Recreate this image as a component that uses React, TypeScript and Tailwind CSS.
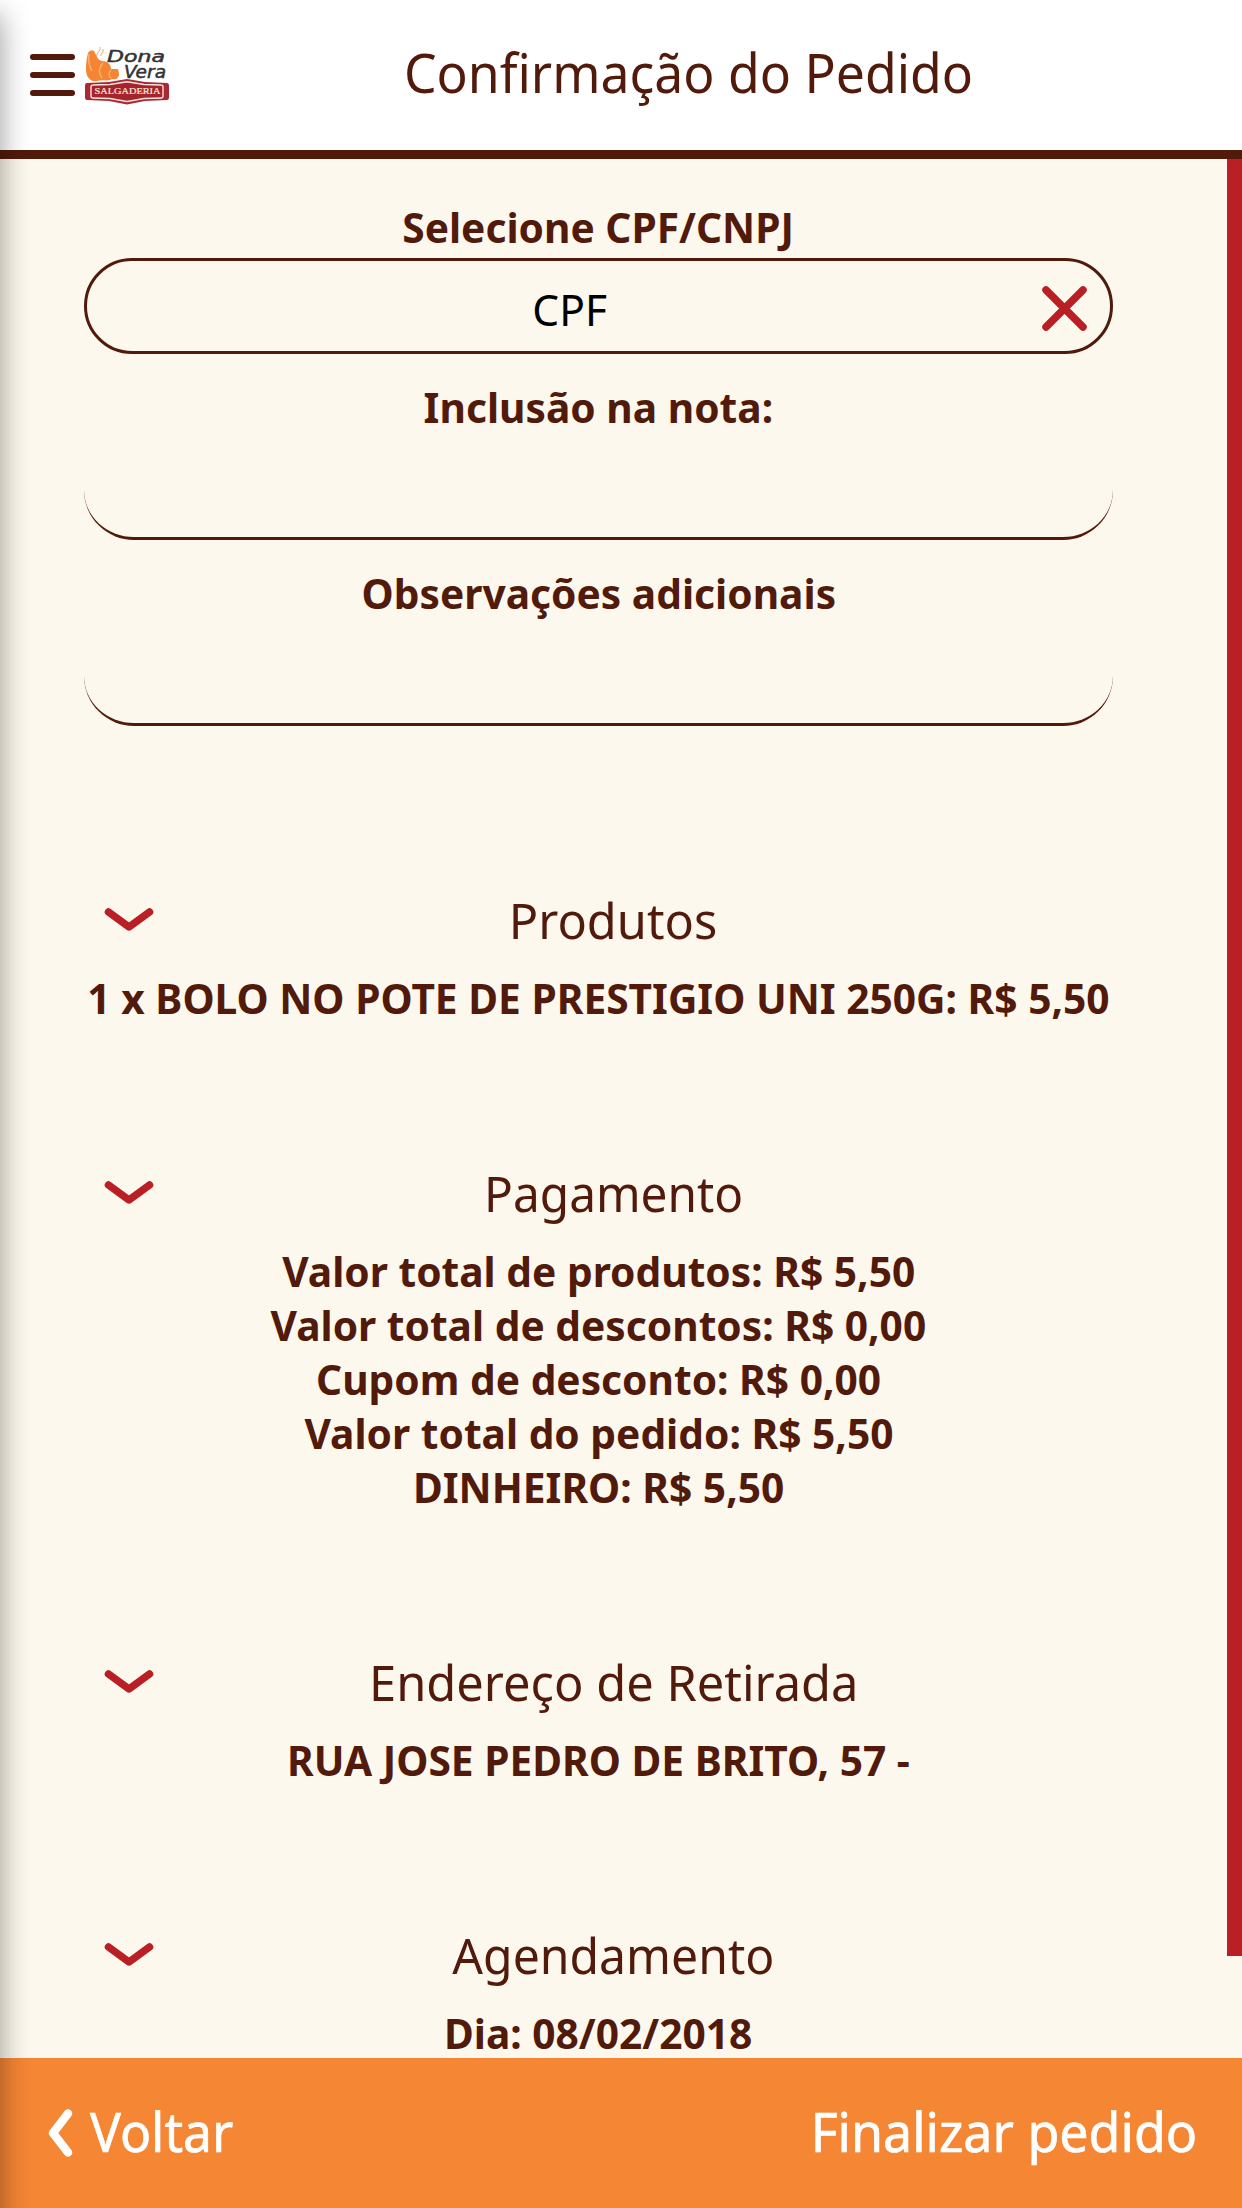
import * as React from "react";
import clsx from "clsx";

type Section = {
  title: string;
  lines: string[];
  titleClass: string;
};

const sections: Section[] = [
  {
    title: "Produtos",
    lines: ["1 x BOLO NO POTE DE PRESTIGIO UNI 250G: R$ 5,50"],
    titleClass: "scale-x-[0.974]",
  },
  {
    title: "Pagamento",
    lines: [
      "Valor total de produtos: R$ 5,50",
      "Valor total de descontos: R$ 0,00",
      "Cupom de desconto: R$ 0,00",
      "Valor total do pedido: R$ 5,50",
      "DINHEIRO: R$ 5,50",
    ],
    titleClass: "scale-x-[0.955]",
  },
  {
    title: "Endereço de Retirada",
    lines: ["RUA JOSE PEDRO DE BRITO, 57 -"],
    titleClass: "scale-x-[0.976]",
  },
  {
    title: "Agendamento",
    lines: ["Dia: 08/02/2018"],
    titleClass: "scale-x-[0.962]",
  },
];

function Logo() {
  return (
    <svg width="84" height="62" viewBox="0 0 84 62" className="shrink-0">
      <path
        d="M3 8 C6 4 9 5 10 8 C12 12 13 15 17 16 C22 16 26 19 26 24 L33 24 L34 29 C34 33 31 35 27 34 C22 37 17 34 12 36 C6 37 1 33 1 24 C1 17 2 12 3 8 Z"
        fill="#f58433"
      />
      <path d="M4 9 C3 16 4 21 7 26 M18 18 C14 22 13 28 17 33 M26 25 C23 28 24 32 26 33" stroke="#fbb478" strokeWidth="1.3" fill="none" />
      <path d="M12 11 C11 8 16 6 15 2 M16 11 C15 9 19 8 18 4" stroke="#f3a169" strokeWidth="1" fill="none" />
      <text x="22" y="17" fontFamily="DejaVu Sans" fontStyle="italic" fontSize="15.5" fill="#333" stroke="#333" strokeWidth="0.5" textLength="58" lengthAdjust="spacingAndGlyphs">
        Dona
      </text>
      <text x="39" y="33" fontFamily="DejaVu Sans" fontStyle="italic" fontSize="17" fill="#333" stroke="#333" strokeWidth="0.5" textLength="42" lengthAdjust="spacingAndGlyphs">
        Vera
      </text>
      <path d="M2 38 L24 37 L42 34 L60 37 L82 38 Q84 38 84 41 L84 52 Q84 55 82 55 L60 56 L42 59.5 L24 56 L2 55 Q0 55 0 52 L0 41 Q0 38 2 38 Z" fill="#a92a35" />
      <path d="M8 40 L25 39.5 L42 36.8 L59 39.5 L76 40 Q78 40 78 42 L78 51 Q78 53 76 53 L59 53.5 L42 56.5 L25 53.5 L8 53 Q6 53 6 51 L6 42 Q6 40 8 40 Z" fill="#a4232d" stroke="#f7e3dc" strokeWidth="1.4" />
      <text x="9.5" y="49.4" fontFamily="Liberation Serif" fontSize="9" fill="#ffe6d8" stroke="#ffe6d8" strokeWidth="0.2" textLength="66" lengthAdjust="spacingAndGlyphs">
        SALGADERIA
      </text>
    </svg>
  );
}

function Header() {
  return (
    <header className="flex h-[159px] shrink-0 border-b-9 border-[#511a0b] bg-white">
      <div className="flex w-[169px] shrink-0 items-start pl-[30px] pt-[45px]">
        <div className="mt-[9px] mr-[10px] flex w-[45px] shrink-0 flex-col gap-3">
          <span className="h-[6px] rounded-full bg-[#511a0b]" />
          <span className="h-[6px] rounded-full bg-[#511a0b]" />
          <span className="h-[6px] rounded-full bg-[#511a0b]" />
        </div>
        <Logo />
      </div>
      <h1 className="mr-[34px] flex-1 scale-x-[0.957] text-center text-[54px] leading-[144px]">
        Confirmação do Pedido
      </h1>
    </header>
  );
}

function BoldLine({ children, className }: { children: string; className?: string }) {
  return (
    <p className={clsx("flex justify-center text-[42px] leading-[54px] font-bold whitespace-nowrap", className)}>
      <span className="scale-x-[0.969]">{children}</span>
    </p>
  );
}

function Field({ label }: { label: string }) {
  return (
    <div className="flex flex-col pt-[26px]">
      <BoldLine>{label}</BoldLine>
      <input aria-label={label} className="h-[106px] rounded-[50px] border-b-3 border-[#511a0b] bg-transparent px-8 outline-none" />
    </div>
  );
}

function OrderSection({ title, lines, titleClass }: Section) {
  return (
    <section className="mb-[133px]">
      <div className="mb-4 flex h-[70px] items-center pl-5">
        <svg width="50" height="24" viewBox="0 0 50 24" className="shrink-0">
          <path d="M4.500 4 L25 19 L45.500 4" stroke="#b91f25" strokeWidth="7.500" strokeLinecap="round" strokeLinejoin="round" fill="none" />
        </svg>
        <h2 className="mr-10 flex flex-1 justify-center text-[50px] leading-[70px]">
          <span className={titleClass}>{title}</span>
        </h2>
      </div>
      {lines.map((line) => (
        <BoldLine key={line}>{line}</BoldLine>
      ))}
    </section>
  );
}

function Footer() {
  return (
    <footer className="flex h-[150px] shrink-0 items-center justify-between bg-[#f48634] pr-[45px] pl-[48px] text-[54px] leading-[70px] text-white">
      <button className="flex items-center">
        <svg width="25" height="50" viewBox="0 0 25 50" className="mr-[17px]">
          <path d="M20 5.500 L5 25 L20 44.500" stroke="white" strokeWidth="8.500" strokeLinecap="round" strokeLinejoin="round" fill="none" />
        </svg>
        <span className="origin-left scale-x-[0.955] pb-[5px] [-webkit-text-stroke:0.7px_white]">Voltar</span>
      </button>
      <button className="origin-right scale-x-[0.961] pb-[5px] [-webkit-text-stroke:0.7px_white]">Finalizar pedido</button>
    </footer>
  );
}

export default function App() {
  return (
    <div className="relative flex h-[2208px] w-[1242px] flex-col overflow-hidden bg-[#fcf8ed] font-['Noto_Sans',sans-serif] text-[#511a0b]">
      <Header />
      <div className="flex min-h-0 flex-1">
        <main className="w-[1227px] overflow-hidden pt-[41px] pr-[114px] pl-[84px]">
          <BoldLine>Selecione CPF/CNPJ</BoldLine>
          <div className="mt-1 flex h-24 items-center rounded-full border-3 border-[#511a0b] pt-[5px] pr-[23px]">
            <span className="flex-1 pl-[10px] text-center text-[44px] leading-[60px] text-black">
              <span className="inline-block scale-x-[0.965]">CPF</span>
            </span>
            <svg width="45" height="45" viewBox="0 0 45 45">
              <path d="M4 4 L41 41 M41 4 L4 41" stroke="#b91f25" strokeWidth="7.500" strokeLinecap="round" />
            </svg>
          </div>
          <Field label="Inclusão na nota:" />
          <Field label="Observações adicionais" />
          <div className="mt-[159px]">
            {sections.map((section) => (
              <OrderSection key={section.title} {...section} />
            ))}
          </div>
        </main>
        <div className="h-[1797px] w-[15px] bg-[#b91f25]" />
      </div>
      <Footer />
      {/* edge shadow cast by the closed side menu */}
      <div className="pointer-events-none absolute top-[15px] -left-10 h-[2300px] w-10 shadow-[0_0_30px_rgba(0,0,0,0.4)]" />
    </div>
  );
}
